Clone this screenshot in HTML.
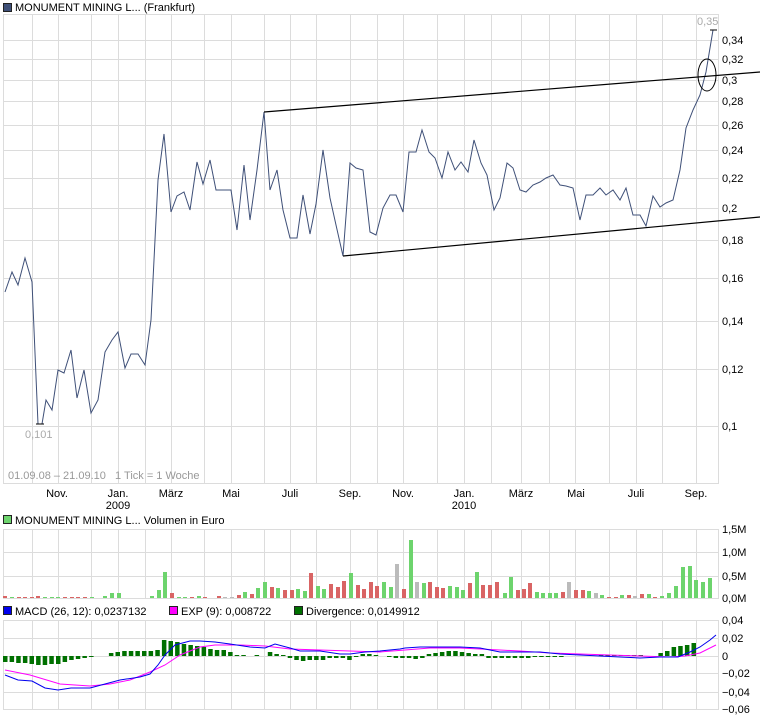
<!DOCTYPE html>
<html><head><meta charset="utf-8"><style>
body{margin:0;background:#fff;width:760px;height:718px;overflow:hidden}
svg{display:block;font-family:"Liberation Sans",sans-serif;font-size:11px}
</style></head><body>
<svg id="s" width="760" height="718" xmlns="http://www.w3.org/2000/svg"></svg>
<script>
var s=document.getElementById('s'),h='';
var vx=[32,58,91,118,145,171,204,231,264,290,316,350,377,403,437,464,491,521,549,575,609,636,662,696];
function grid(t,b,ys){h+='<rect x="3.5" y="'+(t+.5)+'" width="715" height="'+(b-t)+'" fill="none" stroke="#dcdcdc"/>';
vx.forEach(function(x){h+='<line x1="'+(x+.5)+'" y1="'+t+'" x2="'+(x+.5)+'" y2="'+b+'" stroke="#dcdcdc"/>'});
ys.forEach(function(y){h+='<line x1="3" y1="'+(y+.5)+'" x2="718" y2="'+(y+.5)+'" stroke="#dcdcdc"/>'});}
var my=[[40,'0,34'],[59,'0,32'],[80,'0,3'],[101,'0,28'],[125,'0,26'],[150,'0,24'],[178,'0,22'],[208,'0,2'],[240,'0,18'],[278,'0,16'],[321,'0,14'],[369,'0,12'],[426,'0,1']];
grid(14,483,my.map(function(a){return a[0]}));
my.forEach(function(a){h+='<text x="722" y="'+(a[0]+4)+'">'+a[1]+'</text>'});
h+='<rect x="3.5" y="3.5" width="8" height="8" fill="#3f5078" stroke="#222"/><text x="15" y="11">MONUMENT MINING L... (Frankfurt)</text>';
var ml=[[57,'Nov.'],[118,'Jan.'],[171,'März'],[231,'Mai'],[290,'Juli'],[350,'Sep.'],[403,'Nov.'],[464,'Jan.'],[521,'März'],[576,'Mai'],[636,'Juli'],[696,'Sep.']];
ml.forEach(function(a){h+='<text x="'+a[0]+'" y="497" text-anchor="middle">'+a[1]+'</text>'});
h+='<text x="118" y="509" text-anchor="middle">2009</text><text x="464" y="509" text-anchor="middle">2010</text>';
h+='<text x="8" y="479" fill="#999" style="white-space:pre">01.09.08 – 21.09.10   1 Tick = 1 Woche</text>';
var p="5,292 12,272 18,285 25,258 32,282 38,424 42,424 46,400 52,410 58,370 64,373 71,350 77,398 84,370 91,413 98,400 105,352 112,340 118,332 125,368 131,354 138,354 145,365 151,320 158,180 164,134 171,212 177,196 184,192 190,210 197,162 203,184 210,160 216,190 223,190 231,190 237,230 244,165 250,220 257,170 264,112 270,190 277,170 283,210 290,238 297,238 303,195 310,234 316,204 323,150 330,198 336,225 343,256 350,163 356,168 363,170 370,232 376,235 383,208 390,195 396,195 403,212 409,152 416,152 422,130 429,152 435,158 442,178 448,152 455,170 461,162 468,172 474,140 481,163 487,175 494,210 500,198 507,163 513,168 520,190 526,192 533,185 540,182 546,178 553,175 560,185 566,186 573,188 580,220 586,195 593,195 600,188 606,195 613,190 620,200 626,188 633,215 640,215 646,226 653,196 660,207 666,203 673,200 680,170 686,128 693,110 700,95 706,72 713,30";
h+='<polyline points="'+p+'" fill="none" stroke="#3f5078" stroke-width="1"/>';
h+='<line x1="264" y1="112" x2="760" y2="72" stroke="#000" stroke-width="1.2"/><line x1="343" y1="256" x2="760" y2="217" stroke="#000" stroke-width="1.2"/>';
h+='<ellipse cx="707" cy="75" rx="9" ry="16" fill="none" stroke="#000"/><line x1="710" y1="30" x2="717" y2="30" stroke="#000"/><line x1="36" y1="424" x2="44" y2="424" stroke="#000"/>';
h+='<text x="697" y="25" fill="#aaa">0,35</text><text x="25" y="438" fill="#aaa">0,101</text>';
grid(529,598,[552,576]);
[[533,'1,5M'],[556,'1,0M'],[580,'0,5M'],[602,'0,0M']].forEach(function(a){h+='<text x="722" y="'+a[0]+'">'+a[1]+'</text>'});
h+='<rect x="3.5" y="515.5" width="8" height="8" fill="#6dd46d" stroke="#222"/><text x="15" y="524">MONUMENT MINING L... Volumen in Euro</text>';
var G='#6dd46d',R='#d96464',Y='#bbbbbb';
var vb=[[3,2,R],[10,1,G],[17,1,R],[23,1,R],[30,1,R],[36,2,R],[43,1,G],[50,1,G],[56,1,G],[63,1,R],[70,1,R],[76,1,R],[83,1,R],[90,1,G],[103,2,G],[110,5,G],[117,5,G],[150,2,G],[157,8,G],[163,26,G],[170,5,R],[177,1,G],[183,1,G],[190,1,R],[197,2,G],[203,1,R],[217,2,R],[223,1,Y],[230,1,Y],[237,3,R],[243,6,G],[250,4,R],[256,10,G],[263,16,G],[270,11,R],[276,10,G],[283,8,R],[290,8,R],[296,9,G],[303,7,G],[309,25,R],[316,12,G],[322,9,G],[329,14,R],[336,11,R],[342,17,R],[349,25,G],[356,13,R],[362,9,R],[369,16,R],[375,12,R],[382,16,G],[389,11,G],[395,34,Y],[402,9,R],[409,58,G],[415,16,Y],[422,15,G],[428,16,R],[435,11,R],[441,10,R],[448,12,G],[455,11,G],[461,8,G],[468,15,R],[475,26,G],[481,13,R],[488,13,R],[495,16,R],[503,5,G],[509,21,G],[516,8,R],[522,9,R],[528,15,R],[535,6,G],[541,5,G],[548,5,G],[554,5,G],[561,6,R],[567,16,Y],[574,8,R],[581,8,R],[587,7,G],[594,5,Y],[600,3,G],[607,1,R],[614,1,R],[620,3,G],[627,3,R],[633,2,Y],[640,4,R],[647,4,G],[653,1,R],[660,2,G],[667,5,G],[674,12,G],[681,31,G],[688,32,G],[694,18,G],[701,16,G],[708,20,G]];
vb.forEach(function(b){h+='<rect x="'+b[0]+'" y="'+(598-b[1])+'" width="4" height="'+b[1]+'" fill="'+b[2]+'"/>'});
grid(620,709,[638,656,673,692]);
[[624,'0,04'],[642,'0,02'],[660,'0'],[677,'−0,02'],[696,'−0,04'],[713,'−0,06']].forEach(function(a){h+='<text x="722" y="'+a[0]+'">'+a[1]+'</text>'});
h+='<rect x="3.5" y="606.5" width="8" height="8" fill="#0000ee" stroke="#222"/><text x="15" y="615">MACD (26, 12): 0,0237132</text>';
h+='<rect x="169.5" y="606.5" width="8" height="8" fill="#ff00ff" stroke="#222"/><text x="181" y="615">EXP (9): 0,008722</text>';
h+='<rect x="294.5" y="606.5" width="8" height="8" fill="#007000" stroke="#222"/><text x="306" y="615">Divergence: 0,0149912</text>';
var dv=[-6,-6,-7,-7,-8,-9,-9,-8,-8,-6,-4,-3,-2,-1,0,0,3,4,5,5,5,5,5,6,16,15,14,12,11,10,9,7,6,6,4,1,1,0,1,0,4,2,1,-2,-4,-5,-4,-4,-4,-2,-2,-2,-4,-1,2,2,1,0,-1,-2,-2,-2,-3,-2,2,3,4,5,5,4,3,2,2,-2,-2,-2,-2,-2,-2,-2,-1,-1,-1,-1,-1,0,0,0,0,0,1,1,1,1,1,1,1,0,0,3,5,9,10,11,13];
dv.forEach(function(d,i){var x=3+i*6.62;if(d==0)return;var y=d>0?656-d:656;h+='<rect x="'+x.toFixed(1)+'" y="'+y+'" width="4.5" height="'+Math.abs(d)+'" fill="#007000"/>'});
h+='<polyline fill="none" stroke="#ff00ff" points="5,670 30,675 60,684 90,686 110,684 130,680 150,672 165,665 180,655 200,647 215,645 240,645 265,646 290,649 320,650 350,651 380,652 405,650 430,648 460,648 480,649 500,650 520,651 550,653 580,654 610,655 640,656 670,657 685,656 700,653 716,645"/>';
h+='<polyline fill="none" stroke="#0000ee" points="5,675 18,680 32,681 45,688 58,690 71,688 90,688 105,684 120,680 140,677 150,674 158,665 165,655 175,645 190,641 200,641 215,642 230,644 250,647 265,648 275,644 290,648 300,651 320,651 340,654 350,654 365,652 380,651 400,649 405,648 420,647 440,647 460,647 480,648 500,652 520,652 540,652 560,654 580,655 600,656 620,657 640,658 660,657 678,657 690,652 700,647 710,640 716,635"/>';
s.innerHTML=h;
</script>
</body></html>
